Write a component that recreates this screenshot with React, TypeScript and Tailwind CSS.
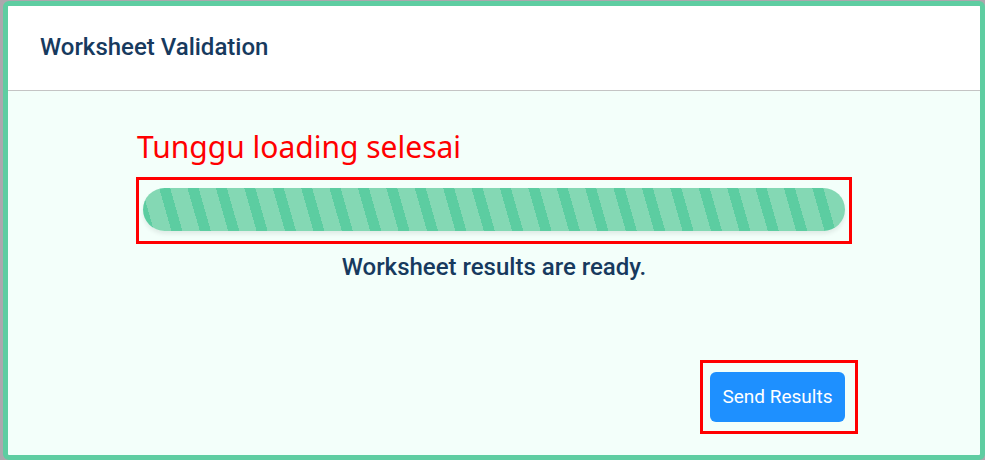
import React from "react";

const App = () => {
  return (
    <div className="w-[985px] h-[460px] bg-[#aca7ad] pl-[3px] pt-[1px] overflow-hidden">
      <div
        className="w-[982px] h-[459px] border-[5px] border-[#5ecda1] rounded-[6px] overflow-hidden flex flex-col bg-[#f3fffa]"
        style={{ fontFamily: "Roboto, 'Liberation Sans', sans-serif" }}
      >
        {/* Header */}
        <div className="h-[85px] shrink-0 bg-white border-b border-[#c4c4c4] flex items-center pl-[32px]">
          <h1 className="text-[24px] font-medium text-[#173a5e] leading-none mt-[-2px]">
            Worksheet Validation
          </h1>
        </div>

        {/* Body */}
        <div className="flex-1 flex flex-col">
          <div className="w-[716px] mx-auto flex flex-col">
            <h2
              className="text-[30px] leading-[40px] text-[#ff0000] mt-[36px] pl-[1px]"
              style={{ fontFamily: "'Noto Sans', sans-serif" }}
            >
              Tunggu loading selesai
            </h2>

            {/* Progress */}
            <div className="mt-[10px] border-[3px] border-[#ff0000] pl-[4px] pr-[4px] pt-[8px] pb-[10px]">
              <div className="h-[43px] rounded-full shadow-[0_3px_4px_rgba(0,0,0,0.08)] bg-[repeating-linear-gradient(74deg,#5ccda1_0px,#5ccda1_10.6px,#84d8b4_10.6px,#84d8b4_27.3px)]" />
            </div>

            <p className="text-center text-[24px] font-medium text-[#173a5e] mt-[8px] leading-[30px]">
              Worksheet results are ready.
            </p>
          </div>

          <div className="flex justify-end pr-[122px] mt-[78px]">
            <div className="border-[3px] border-[#ff0000] pl-[7px] pr-[10px] pt-[9px] pb-[9px]">
              <button className="w-[135px] h-[50px] rounded-[6px] bg-[#1e90ff] text-white text-[19px]">
                Send Results
              </button>
            </div>
          </div>
        </div>
      </div>
    </div>
  );
};

export default App;
